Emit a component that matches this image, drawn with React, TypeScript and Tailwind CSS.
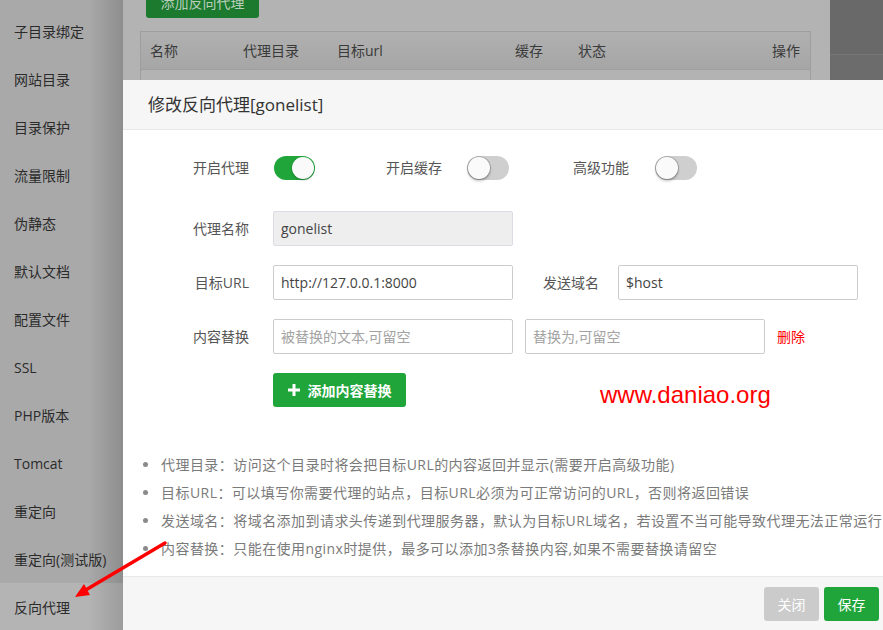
import React from 'react';

const sideItems = [
  '子目录绑定',
  '网站目录',
  '目录保护',
  '流量限制',
  '伪静态',
  '默认文档',
  '配置文件',
  'SSL',
  'PHP版本',
  'Tomcat',
  '重定向',
  '重定向(测试版)',
  '反向代理',
];

const notes = [
  '代理目录：访问这个目录时将会把目标URL的内容返回并显示(需要开启高级功能)',
  '目标URL：可以填写你需要代理的站点，目标URL必须为可正常访问的URL，否则将返回错误',
  '发送域名：将域名添加到请求头传递到代理服务器，默认为目标URL域名，若设置不当可能导致代理无法正常运行',
  '内容替换：只能在使用nginx时提供，最多可以添加3条替换内容,如果不需要替换请留空',
];

function Toggle({ on }: { on: boolean }) {
  return (
    <div
      className={
        on
          ? 'relative w-[41px] h-[24px] rounded-full bg-[#20a53a] shrink-0'
          : 'relative w-[42px] h-[24px] rounded-full bg-[#cfcfcf] shrink-0'
      }
    >
      <div
        className={
          on
            ? 'absolute top-[1px] right-[1px] w-[22px] h-[22px] rounded-full bg-[#fafafa] shadow-[0_1px_2px_rgba(0,0,0,0.3)]'
            : 'absolute top-[1px] left-[1px] w-[22px] h-[22px] rounded-full bg-[#fafafa] shadow-[0_0_0_1px_rgba(0,0,0,0.18),0_2px_3px_rgba(0,0,0,0.25)]'
        }
      />
    </div>
  );
}

export default function App() {
  return (
    <div className="relative w-[883px] h-[630px] overflow-hidden bg-[#6c6c6c] font-['Open_Sans','Noto_Sans_CJK_SC',sans-serif]">
      {/* dimmed page behind the layer */}
      <div className="flex h-full">
        {/* sidebar */}
        <div className="w-[123px] h-full pt-[7px] bg-[linear-gradient(to_right,#a9a9a9_72%,#8e8e8e)]">
          {sideItems.map((item, i) => (
            <div
              key={item}
              className={
                i === sideItems.length - 1
                  ? 'h-[48px] flex items-center pl-[14px] text-[14px] text-[#2b2b2b] bg-[linear-gradient(to_right,#b4b4b4_72%,#9c9c9c)]'
                  : 'h-[48px] flex items-center pl-[14px] text-[14px] text-[#2b2b2b]'
              }
            >
              {item}
            </div>
          ))}
        </div>

        {/* main panel */}
        <div className="w-[707px] h-full bg-[#b3b3b3] pl-[23px]">
          <div className="-mt-[13px] w-[113px] h-[31px] rounded-[3px] bg-[#1b7a2e] text-[#b9cdbc] text-[14px] flex items-center justify-center">
            添加反向代理
          </div>
          <div className="mt-[13px] -ml-[6px] w-[671px] border border-[#9e9e9e]">
            <div className="h-[38px] flex items-center pl-[9px] pr-[10px] text-[14px] text-[#3a3a3a] whitespace-nowrap bg-[linear-gradient(to_bottom,#b0b0b0,#a6a6a6)] border-b border-[#9e9e9e]">
              <span className="w-[93px]">名称</span>
              <span className="w-[94px]">代理目录</span>
              <span className="w-[178px]">目标url</span>
              <span className="w-[63px]">缓存</span>
              <span className="flex-1">状态</span>
              <span>操作</span>
            </div>
            <div className="h-[40px] bg-[#b3b3b3]" />
          </div>
        </div>

        {/* outside */}
        <div className="flex-1 h-full">
          <div className="h-[55px] border-b border-[#777777] bg-[#696969]" />
        </div>
      </div>

      {/* modal layer */}
      <div className="absolute left-[123px] top-[80px] w-[760px] h-[550px] bg-white flex flex-col">
        <div className="h-[50px] shrink-0 bg-[#f6f6f6] border-b border-[#e8e8e8] pl-[25px] flex items-center text-[17px] text-[#333]">
          修改反向代理[gonelist]
        </div>

        <div className="relative flex-1">
          <div className="pt-[20px] pl-[26px] text-[14px] text-[#555]">
            {/* switches */}
            <div className="h-[35px] flex items-center mb-[26px]">
              <span className="w-[100px] text-right">开启代理</span>
              <div className="ml-[25px]">
                <Toggle on />
              </div>
              <span className="ml-[27px] w-[100px] text-right">开启缓存</span>
              <div className="ml-[25px]">
                <Toggle on={false} />
              </div>
              <span className="ml-[20px] w-[100px] text-right">高级功能</span>
              <div className="ml-[26px]">
                <Toggle on={false} />
              </div>
            </div>

            {/* name */}
            <div className="h-[35px] flex items-center mb-[19px]">
              <span className="w-[100px] text-right">代理名称</span>
              <div className="ml-[24px] w-[240px] h-[35px] px-[7px] flex items-center bg-[#eeeeee] border border-[#dcdbe6] rounded-[2px] text-[#444]">
                gonelist
              </div>
            </div>

            {/* url */}
            <div className="h-[35px] flex items-center mb-[19px]">
              <span className="w-[100px] text-right">目标URL</span>
              <div className="ml-[24px] w-[240px] h-[35px] px-[7px] flex items-center border border-[#cccccc] rounded-[2px] text-[#444]">
                http://127.0.0.1:8000
              </div>
              <span className="ml-[30px]">发送域名</span>
              <div className="ml-[19px] w-[240px] h-[35px] px-[7px] flex items-center border border-[#cccccc] rounded-[2px] text-[#444]">
                $host
              </div>
            </div>

            {/* replace */}
            <div className="h-[35px] flex items-center mb-[19px]">
              <span className="w-[100px] text-right">内容替换</span>
              <div className="ml-[24px] w-[240px] h-[35px] px-[7px] flex items-center border border-[#cccccc] rounded-[2px] text-[#a3a3a3]">
                被替换的文本,可留空
              </div>
              <div className="ml-[12px] w-[240px] h-[35px] px-[7px] flex items-center border border-[#cccccc] rounded-[2px] text-[#a3a3a3]">
                替换为,可留空
              </div>
              <span className="ml-[12px] text-[#ff0000]">删除</span>
            </div>

            <div className="ml-[124px] w-[133px] h-[34px] rounded-[3px] bg-[#20a53a] text-white flex items-center justify-center gap-[8px] font-semibold">
              <svg width="12" height="12" viewBox="0 0 12 12" fill="#fff">
                <rect x="4.5" y="0" width="3" height="12" />
                <rect x="0" y="4.5" width="12" height="3" />
              </svg>
              <span>添加内容替换</span>
            </div>
          </div>

          {/* notes */}
          <div className="mt-[43px] pl-[20px] text-[14px] tracking-[0.45px] text-[#7a7a7a] whitespace-nowrap">
            {notes.map((n) => (
              <div key={n} className="h-[28px] flex items-center">
                <span className="w-[5px] h-[5px] rounded-full bg-[#8a8a8a] shrink-0" />
                <span className="ml-[13px]">{n}</span>
              </div>
            ))}
          </div>

          {/* watermark */}
          <div className="absolute left-[477px] top-[250px] text-[24px] leading-[30px] text-[#ff0000] font-['Liberation_Sans',sans-serif]">
            www.daniao.org
          </div>
        </div>

        <div className="h-[54px] shrink-0 border-t border-[#e8e8e8] bg-[#f6f6f6] flex justify-end items-start pt-[10px] pr-[4px] gap-[5px]">
          <div className="w-[55px] h-[34px] rounded-[3px] bg-[#cbcbcb] text-white text-[14px] flex items-center justify-center">
            关闭
          </div>
          <div className="w-[55px] h-[34px] rounded-[3px] bg-[#20a53a] text-white text-[14px] flex items-center justify-center">
            保存
          </div>
        </div>
      </div>

      {/* red annotation arrow */}
      <svg className="absolute left-0 top-0 pointer-events-none" width="883" height="630" viewBox="0 0 883 630">
        <line x1="165" y1="543" x2="84" y2="591" stroke="#ff0000" strokeWidth="3.5" strokeLinecap="round" />
        <polygon points="75,597 90,595 84,584" fill="#ff0000" />
      </svg>
    </div>
  );
}
